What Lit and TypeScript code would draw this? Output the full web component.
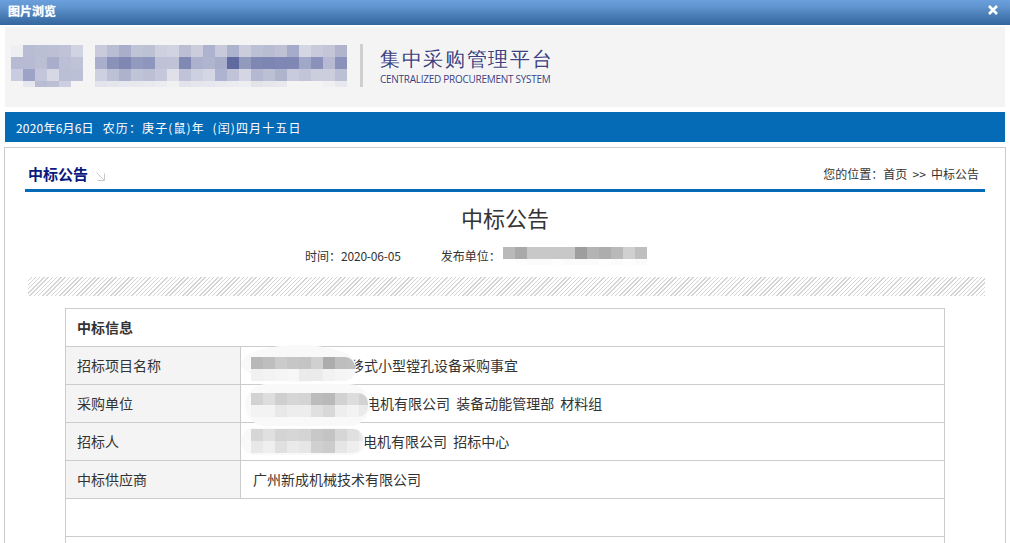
import { LitElement, html, css, svg } from "lit";
import { customElement } from "lit/decorators.js";

const mosaic = (rows: string[][], heights: number[], cell = 12) => html`<div
  class="mosaic"
  style="grid-template-columns:repeat(${rows[0].length},${cell}px);grid-template-rows:${heights.map((h) => h + "px").join(" ")}"
>
  ${rows.flat().map((c) => html`<i style="background:#${c}"></i>`)}
</div>`;

const gray = (s: string) => s.split(" ").map((v) => v + v + v);
const list = (s: string) => s.split(" ");

const LOGO_A = [
  list("eeeff3 b9bdd4 bbbfd4 bcc0d5 c0c3d7 d0d3e2"),
  list("b6bad2 b6bad2 bbbfd3 a9aecb bcc0d6 bfc3d7"),
  list("c9cce0 9ca3c6 c3c6da d6d8e5 bbbfd6 bcc0d6"),
  list("f4f4f4 e5e6ee b9bdd4 bcc0d4 cdcfe0 f4f4f4"),
];
const LOGO_B = [
  list("c9cbdc b9bdd3 a9afcb c0c4d7 bdc1d4 ced0df d1d3e2 bcbfd4 cbcddd adb2ce c8cadb aeb3cd cbcddd bcc0d4 b9bdd3 bfc2d5 a6abc9 d5d6e3 c9cbdc c4c6d8 b0b4cc"),
  list("a9aecc 8a92ba 7f88b3 939ac0 8e96bd bfc2d7 c0c3d6 8088b4 acb1ce b0b5cf a8adca 6069a0 929abe 7f88b3 7d86b2 7f88b4 7f88b4 a1a7c6 8a91ba b7bad2 8a91ba"),
  list("ccd0e0 bdc1d5 aeb3cd c0c4d7 bcc0d4 c5c8da dfe0e8 c0c3d7 cdd0e0 d4d6e3 aeb3cf c1c4d8 d4d6e3 b4b8d1 bcc0d5 afb4cd c9cbdd c2c5d8 ccceDE ccceDE bcc0d5"),
  list("e3e4eb e5e6ec e7e8ef e7e8ee e9eaf0 ebecf0 f1f1f4 e3e4eb e5e6ec e6e7ee e9eaf0 ebecf0 eeeef2 e3e4ea e6e7ed e8e8ee f4f4f4 f4f4f4 f4f4f4 f0f0f3 e8e9ef"),
];
const META = [
  gray("b9 a9 c8 c8 c8 c8 9e b4 ad b9 d0 bf"),
  gray("ff fd fb fb fd fb fb fb fd fb fd fb"),
];
const ROW1 = [
  gray("b8 be cb c6 c4 d0 ac be c0"),
  gray("f1 f3 f5 f7 eb eb f2 f5 f6"),
];
const ROW2 = [
  gray("d2 de cf d6 d4 bc b9 d2 dd d2"),
  gray("f3 f3 e8 ed ed e0 d8 ee f3 ea"),
];
const ROW3 = [
  gray("d6 e0 d4 d6 d4 c8 c4 d6 e0 e8"),
  gray("e8 ef e0 ea e6 d0 cc e6 ee f4"),
];

const closeIcon = svg`<svg class="close" viewBox="0 0 12 12" width="12" height="12" aria-hidden="true">
  <path d="M2 2 L10 10 M10 2 L2 10" stroke="#fff" stroke-width="2.6" fill="none"/>
</svg>`;

const cornerIcon = svg`<svg class="corner" viewBox="0 0 9 9" width="9" height="9" aria-hidden="true">
  <path d="M0.5 0.5 L8 8 M8.5 1.5 V8.5 H1.5" stroke="#c8c8c8" stroke-width="1" fill="none"/>
</svg>`;

@customElement("app-root")
export class AppRoot extends LitElement {
  static styles = css`
    :host {
      display: block;
      height: 100vh;
      overflow: hidden;
      background: #fff;
      color: #333;
      font-family: "Noto Sans CJK SC", "Liberation Sans", sans-serif;
      font-size: 12px;
    }
    .mosaic {
      display: grid;
    }
    .mosaic i {
      display: block;
    }
    .titlebar {
      height: 25px;
      display: flex;
      align-items: center;
      justify-content: space-between;
      padding: 0 11px 5px 8px;
      box-sizing: border-box;
      background: linear-gradient(#6b9fdc 0%, #6296d0 25%, #4578b0 70%, #33669e 100%);
      color: #fff;
      font-weight: 700;
      font-size: 12px;
      line-height: 17px;
      text-shadow: 0 0 1px #cfe0f2;
    }
    .close {
      display: block;
    }
    .banner {
      margin: 2px 5px 0;
      height: 80px;
      background: #f4f4f4;
      display: flex;
      align-items: flex-start;
      padding: 18px 0 0 6px;
      box-sizing: border-box;
      gap: 12px;
    }
    .sep {
      width: 3px;
      height: 43px;
      margin: -1px 5px 0 1px;
      background: #cfcfcf;
    }
    .logo-text {
      display: flex;
      flex-direction: column;
      color: #3b4181;
      text-shadow: 1px 1px 1px #fff;
    }
    .logo-cn {
      font-family: "Liberation Serif", serif;
      font-size: 20px;
      line-height: 26px;
      margin-top: 1px;
      letter-spacing: 1.7px;
      font-weight: 400;
      white-space: nowrap;
    }
    .logo-en {
      font-family: "Open Sans", "Liberation Sans", sans-serif;
      font-size: 10px;
      line-height: 14px;
      letter-spacing: -0.27px;
      white-space: nowrap;
    }
    .datebar {
      margin: 5px 5px 0;
      height: 30px;
      background: #066bb7;
      color: #fff;
      display: flex;
      align-items: center;
      padding-left: 11px;
      white-space: pre;
    }
    .date-a {
      letter-spacing: 0.2px;
      margin-right: 9px;
    }
    .date-b {
      letter-spacing: 1.1px;
      word-spacing: 4px;
    }
    .card {
      margin: 5px 4px 0;
      border: 1px solid #ccc;
      border-bottom: 0;
      padding: 0 20px;
    }
    .crumbbar {
      height: 44px;
      box-sizing: border-box;
      border-bottom: 3px solid #066bb7;
      display: flex;
      align-items: center;
      justify-content: space-between;
      padding: 11px 6px 0 3px;
    }
    .crumb-title {
      display: flex;
      align-items: center;
      gap: 8px;
      font-weight: 700;
      font-size: 15px;
      color: #0b1a7d;
      line-height: 20px;
    }
    .corner {
      margin-top: 4px;
    }
    .crumb-path {
      white-space: pre;
      line-height: 18px;
      word-spacing: 2.5px;
    }
    h1 {
      margin: 10px 0 0;
      font-size: 22px;
      line-height: 30px;
      font-weight: 400;
      text-align: center;
      color: #333;
    }
    .meta {
      display: flex;
      align-items: flex-start;
      padding-left: 280px;
      margin-top: 15px;
      height: 18px;
      line-height: 18px;
    }
    .narrow {
      letter-spacing: -0.2px;
    }
    .meta .gap {
      width: 40px;
    }
    .meta .mosaic {
      margin: 0 0 0 2px;
    }
    .hatch {
      margin: 12px 0 0 3px;
      height: 19px;
      background: repeating-linear-gradient(-45deg, #d4d4d4 0 1px, #fff 1px 3px);
    }
    .table {
      margin: 12px 40px 0;
      border: 1px solid #ccc;
      border-width: 1px 1px 0;
      font-size: 14px;
    }
    .row {
      height: 38px;
      box-sizing: border-box;
      border-bottom: 1px solid #ccc;
      display: grid;
      grid-template-columns: 175px 1fr;
      line-height: 36px;
    }
    .row.empty {
      display: block;
    }
    .head {
      height: 38px;
      box-sizing: border-box;
      border-bottom: 1px solid #ccc;
      padding-left: 11px;
      line-height: 36px;
      font-weight: 700;
    }
    .label {
      background: #f4f4f4;
      border-right: 1px solid #ccc;
      padding-left: 11px;
    }
    .value {
      position: relative;
      padding-left: 12px;
      white-space: pre;
      word-spacing: 3px;
    }
    .value.v1 {
      padding-left: 109px;
    }
    .value.v2 {
      padding-left: 125px;
    }
    .value.v3 {
      padding-left: 122px;
    }
    .blob {
      position: absolute;
      background: #f9f9f9;
      border-radius: 22px;
    }
    .cover {
      position: absolute;
      overflow: hidden;
      border-radius: 0 10px 10px 0;
    }
    .b1 {
      left: 0;
      top: -2px;
      width: 114px;
      height: 37px;
      border-radius: 50% / 50%;
    }
    .c1 {
      left: 10px;
      top: 10px;
      width: 104px;
    }
    .b2 {
      left: 4px;
      top: -1px;
      width: 125px;
      height: 42px;
    }
    .c2 {
      left: 10px;
      top: 8px;
      width: 117px;
    }
    .b3 {
      left: 0;
      top: 5px;
      width: 124px;
      height: 27px;
    }
    .c3 {
      left: 10px;
      top: 6px;
      width: 112px;
    }
  `;

  render() {
    return html`
      <div class="titlebar"><span>图片浏览</span>${closeIcon}</div>
      <div class="banner">
        ${mosaic(LOGO_A, [12, 12, 12, 6])} ${mosaic(LOGO_B, [12, 12, 12, 6])}
        <div class="sep"></div>
        <div class="logo-text">
          <span class="logo-cn">集中采购管理平台</span>
          <span class="logo-en">CENTRALIZED PROCUREMENT SYSTEM</span>
        </div>
      </div>
      <div class="datebar"><span class="date-a">2020年6月6日</span><span class="date-b">农历：庚子(鼠)年 (闰)四月十五日</span></div>
      <div class="card">
        <div class="crumbbar">
          <div class="crumb-title">中标公告${cornerIcon}</div>
          <div class="crumb-path">您的位置：首页 &gt;&gt; 中标公告</div>
        </div>
        <h1>中标公告</h1>
        <div class="meta">
          <span>时间：</span><span class="narrow">2020-06-05</span><span class="gap"></span>
          <span>发布单位：</span>${mosaic(META, [12, 6])}
        </div>
        <div class="hatch"></div>
        <div class="table">
          <div class="head">中标信息</div>
          <div class="row">
            <div class="label">招标项目名称</div>
            <div class="value v1">移式小型镗孔设备采购事宜<div class="blob b1"></div><div class="cover c1">${mosaic(ROW1, [12, 12])}</div></div>
          </div>
          <div class="row">
            <div class="label">采购单位</div>
            <div class="value v2">电机有限公司 装备动能管理部 材料组<div class="blob b2"></div><div class="cover c2">${mosaic(ROW2, [12, 12])}</div></div>
          </div>
          <div class="row">
            <div class="label">招标人</div>
            <div class="value v3">电机有限公司 招标中心<div class="blob b3"></div><div class="cover c3">${mosaic(ROW3, [12, 12])}</div></div>
          </div>
          <div class="row">
            <div class="label">中标供应商</div>
            <div class="value">广州新成机械技术有限公司</div>
          </div>
          <div class="row empty"></div>
          <div class="row empty"></div>
        </div>
      </div>
    `;
  }
}
